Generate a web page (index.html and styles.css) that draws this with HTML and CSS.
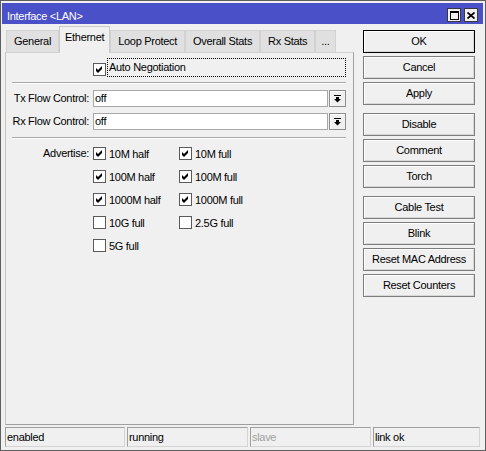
FILE: index.html
```html
<!DOCTYPE html>
<html lang="en">
<head>
    <meta charset="UTF-8">
    <title>Interface &lt;LAN&gt;</title>
    <link rel="stylesheet" href="styles.css">
</head>
<body>
    <div class="window">
        <div class="titlebar">
            <span class="title">Interface &lt;LAN&gt;</span>
            <div class="title-buttons">
                <span class="tbtn">
                    <svg width="9" height="9" viewBox="0 0 9 9"><rect x="0.5" y="0.5" width="8" height="8" fill="none" stroke="#000"/><rect x="0" y="0" width="9" height="2" fill="#000"/></svg>
                </span>
                <span class="tbtn">
                    <svg width="8" height="7" viewBox="0 0 8 7"><path d="M0.5 0.5 L7.5 6.5 M7.5 0.5 L0.5 6.5" stroke="#000" stroke-width="1.7"/></svg>
                </span>
            </div>
        </div>

        <div class="main">
            <div class="left">
                <div class="tabs">
                    <div class="tab">General</div>
                    <div class="tab active">Ethernet</div>
                    <div class="tab">Loop Protect</div>
                    <div class="tab">Overall Stats</div>
                    <div class="tab">Rx Stats</div>
                    <div class="tab more">...</div>
                </div>

                <div class="panel">
                    <div class="row">
                        <span></span>
                        <div class="check-field">
                            <span class="checkbox"><svg width="11" height="11" viewBox="0 0 11 11"><polygon points="2,4 4,6 8,2 8,5 4,9 2,7"/></svg></span>
                            <span class="focus">Auto Negotiation</span>
                        </div>
                    </div>

                    <div class="sep"></div>

                    <div class="row field-row">
                        <span class="label">Tx Flow Control:</span>
                        <div class="combo">
                            <span class="input">off</span>
                            <span class="drop"><svg width="7" height="8" viewBox="0 0 7 8"><rect x="0" y="0" width="7" height="1"/><rect x="2" y="2" width="3" height="2"/><polygon points="0,4 7,4 3.5,7.5"/></svg></span>
                        </div>
                    </div>

                    <div class="row field-row">
                        <span class="label">Rx Flow Control:</span>
                        <div class="combo">
                            <span class="input">off</span>
                            <span class="drop"><svg width="7" height="8" viewBox="0 0 7 8"><rect x="0" y="0" width="7" height="1"/><rect x="2" y="2" width="3" height="2"/><polygon points="0,4 7,4 3.5,7.5"/></svg></span>
                        </div>
                    </div>

                    <div class="sep sep-low"></div>

                    <div class="row adv-row">
                        <span class="label adv-label">Advertise:</span>
                        <div class="adv">
                            <label class="chk"><span class="checkbox"><svg width="11" height="11" viewBox="0 0 11 11"><polygon points="2,4 4,6 8,2 8,5 4,9 2,7"/></svg></span>10M half</label>
                            <label class="chk"><span class="checkbox"><svg width="11" height="11" viewBox="0 0 11 11"><polygon points="2,4 4,6 8,2 8,5 4,9 2,7"/></svg></span>10M full</label>
                            <label class="chk"><span class="checkbox"><svg width="11" height="11" viewBox="0 0 11 11"><polygon points="2,4 4,6 8,2 8,5 4,9 2,7"/></svg></span>100M half</label>
                            <label class="chk"><span class="checkbox"><svg width="11" height="11" viewBox="0 0 11 11"><polygon points="2,4 4,6 8,2 8,5 4,9 2,7"/></svg></span>100M full</label>
                            <label class="chk"><span class="checkbox"><svg width="11" height="11" viewBox="0 0 11 11"><polygon points="2,4 4,6 8,2 8,5 4,9 2,7"/></svg></span>1000M half</label>
                            <label class="chk"><span class="checkbox"><svg width="11" height="11" viewBox="0 0 11 11"><polygon points="2,4 4,6 8,2 8,5 4,9 2,7"/></svg></span>1000M full</label>
                            <label class="chk"><span class="checkbox"></span>10G full</label>
                            <label class="chk"><span class="checkbox"></span>2.5G full</label>
                            <label class="chk"><span class="checkbox"></span>5G full</label>
                        </div>
                    </div>
                </div>
            </div>

            <div class="buttons">
                <div class="btn-group">
                    <div class="btn default">OK</div>
                    <div class="btn">Cancel</div>
                    <div class="btn">Apply</div>
                </div>
                <div class="btn-group">
                    <div class="btn">Disable</div>
                    <div class="btn">Comment</div>
                    <div class="btn">Torch</div>
                </div>
                <div class="btn-group">
                    <div class="btn">Cable Test</div>
                    <div class="btn">Blink</div>
                    <div class="btn">Reset MAC Address</div>
                    <div class="btn">Reset Counters</div>
                </div>
            </div>
        </div>

        <div class="statusbar">
            <div class="cell">enabled</div>
            <div class="cell">running</div>
            <div class="cell muted">slave</div>
            <div class="cell last">link ok</div>
        </div>
    </div>
</body>
</html>
```

FILE: styles.css
```css
* {
    margin: 0;
    padding: 0;
    box-sizing: border-box;
}

body {
    background: #f0f0f0;
    font-family: "Liberation Sans", Arial, sans-serif;
    font-size: 11px;
    letter-spacing: -0.3px;
    color: #000;
}

.window {
    width: 486px;
    height: 451px;
    border: 1px solid #5f5f5f;
    padding: 2px 2px 3px 1px;
    display: flex;
    flex-direction: column;
    background: #f0f0f0;
}

/* Title bar */
.titlebar {
    height: 21px;
    flex-shrink: 0;
    background: #4a50c8;
    color: #fff;
    display: flex;
    justify-content: space-between;
    align-items: flex-start;
    padding: 5px 5px 0 5px;
}

.title {
    margin-top: 2px;
    line-height: 13px;
}

.title-buttons {
    display: flex;
    gap: 3px;
}

.tbtn {
    width: 14px;
    height: 14px;
    background: #f0f0f0;
    border: 1px solid #3a3a3a;
    display: flex;
    align-items: center;
    justify-content: center;
}

/* Main area */
.main {
    flex: 1;
    display: flex;
}

.left {
    width: 349px;
    margin-left: 3px;
    margin-top: 2px;
    display: flex;
    flex-direction: column;
}

.tabs {
    display: flex;
    align-items: flex-end;
    height: 26px;
    padding-left: 1px;
    position: relative;
    z-index: 1;
}

.tab {
    height: 22px;
    padding: 0 7px;
    background: #e0e0e0;
    border: 1px solid #d2d2d2;
    border-bottom: none;
    line-height: 20px;
    white-space: nowrap;
}

.tab.active {
    height: 27px;
    margin-bottom: -1px;
    padding: 0 5px;
    background: #f0f0f0;
    border-color: #cacaca;
    line-height: 21px;
}

.tab.more {
    padding: 0 5px;
}

.panel {
    flex: 1;
    border: 1px solid #a0a0a0;
    border-top-color: #d2d2d2;
    border-left-color: #c4c4c4;
    padding: 5px 7px 0 6px;
}

.row {
    display: grid;
    grid-template-columns: 77px 1fr;
    column-gap: 4px;
}

.label {
    text-align: right;
    line-height: 17px;
    white-space: nowrap;
}

.check-field {
    display: flex;
    gap: 1px;
}

.check-field .checkbox {
    align-self: flex-end;
    margin-bottom: 1px;
}

.focus {
    flex: 1;
    height: 19px;
    border: 1px dotted #000;
    padding-left: 1px;
    line-height: 17px;
}

.checkbox {
    width: 13px;
    height: 13px;
    flex-shrink: 0;
    border: 1px solid #5a5a5a;
    background: #fff;
    display: block;
}

.checkbox svg {
    display: block;
}

.sep {
    height: 2px;
    margin-top: 5px;
    border-top: 1px solid #a9a9a9;
    border-bottom: 1px solid #fff;
}

.sep-low {
    margin-top: 7px;
}

.field-row {
    margin-top: 6px;
}

.combo {
    display: flex;
    gap: 1px;
    height: 17px;
}

.input {
    flex: 1;
    background: #fff;
    border: 1px solid #a8a8a8;
    padding-left: 1px;
    line-height: 15px;
}

.drop {
    width: 17px;
    border: 1px solid #8c8c8c;
    background: #f0f0f0;
    box-shadow: inset 1px 1px #fff;
    display: flex;
    align-items: center;
    justify-content: center;
}

.adv-row {
    margin-top: 3px;
}

.adv-label {
    line-height: 23px;
}

.adv {
    display: grid;
    grid-template-columns: 86px 86px;
    grid-auto-rows: 23px;
}

.chk {
    display: flex;
    align-items: center;
    gap: 3px;
    white-space: nowrap;
}

/* Right column buttons */
.buttons {
    width: 112px;
    margin-left: 9px;
    margin-top: 6px;
    display: flex;
    flex-direction: column;
    gap: 8px;
}

.btn-group {
    display: flex;
    flex-direction: column;
    gap: 3px;
}

.btn {
    height: 23px;
    border: 1px solid #7d7d7d;
    background: #f0f0f0;
    box-shadow: inset 1px 1px #fff, inset -1px -1px #d8d8d8;
    text-align: center;
    line-height: 21px;
    white-space: nowrap;
}

.btn.default {
    border-color: #000;
}

/* Status bar */
.statusbar {
    display: flex;
    gap: 2px;
    height: 20px;
    flex-shrink: 0;
    margin: 2px 3px 0 3px;
}

.cell {
    width: 120px;
    border: 1px solid;
    border-color: #a0a0a0 #d4d4d4 #d4d4d4 #a0a0a0;
    padding-left: 1px;
    line-height: 18px;
}

.cell:nth-child(2),
.cell:nth-child(3) {
    width: 121px;
}

.cell.last {
    flex: 1;
}

.cell.muted {
    color: #a0a0a0;
}
```
